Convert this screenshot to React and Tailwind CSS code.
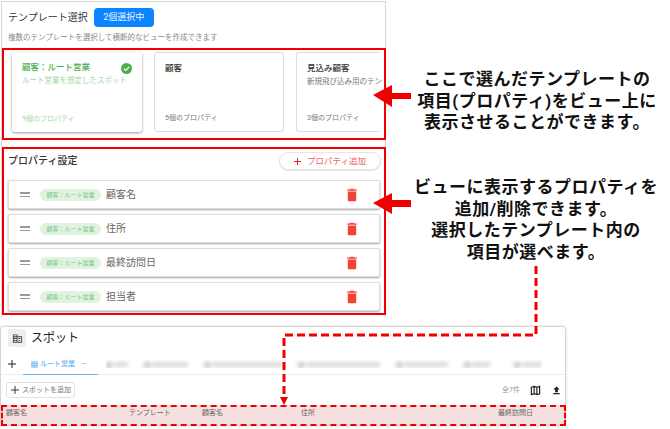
import React from "react";

const font = { fontFamily: '"Roboto","Noto Sans CJK JP",sans-serif' };

function Card({ title, desc, count, selected, narrow }) {
  return (
    <div className={`relative shrink-0 h-[80px] rounded-[3px] bg-white pl-[10px] pt-[9px] ${narrow ? "w-[85px] border border-r-0 border-[#dcdcdc]" : "w-[130px]"} ${selected ? "shadow-[0_1px_3px_rgba(0,0,0,0.4)]" : narrow ? "" : "border border-[#dcdcdc]"}`}>
      <div className={`text-[8.5px] leading-[12px] font-medium whitespace-nowrap ${selected ? "text-[#4caf50]" : "text-[#333]"}`}>{title}</div>
      <div className={`mt-[3px] h-[10px] whitespace-nowrap text-[7.5px] leading-[10px] ${selected ? "text-[#a5d6a7]" : "text-[#777]"}`}>{desc}</div>
      <div className={`absolute left-[10px] bottom-[8px] text-[7px] leading-[10px] ${selected ? "text-[#a5d6a7]" : "text-[#777]"}`}>{count}</div>
      {selected && (
        <svg className="absolute right-[10px] top-[11px]" width="11" height="11" viewBox="0 0 24 24">
          <circle cx="12" cy="12" r="12" fill="#4caf50" />
          <path d="M6.5 12.5l3.8 3.8 7.5-8" fill="none" stroke="#fff" strokeWidth="2.6" />
        </svg>
      )}
    </div>
  );
}

function Row({ name }) {
  return (
    <div className="flex h-[29px] items-center rounded-[2px] border border-[#dedede] bg-white shadow-[0_1px_2px_rgba(0,0,0,0.35)]">
      <div className="ml-[11px] flex w-[10px] flex-col gap-[2px]">
        <div className="h-[1.5px] bg-[#999]" />
        <div className="h-[1.5px] bg-[#999]" />
      </div>
      <div className="ml-[10px] flex h-[12px] w-[61px] items-center justify-center whitespace-nowrap rounded-full bg-[#e0f2e0] text-[6px] text-[#81c784]">顧客：ルート営業</div>
      <div className="ml-[5px] flex-1 text-[10px] text-[#666]">{name}</div>
      <svg className="mr-[21px]" width="12" height="14" viewBox="4 2 16 20" fill="#f44336">
        <path d="M6 19c0 1.1.9 2 2 2h8c1.1 0 2-.9 2-2V7H6v12zM19 4h-3.5l-1-1h-5l-1 1H5v2h14V4z" />
      </svg>
    </div>
  );
}

function BlurTab({ w, gap }) {
  return (
    <div className="flex shrink-0 items-center gap-[2px] blur-[2px]" style={{ marginRight: gap }}>
      <div className="h-[6px] w-[6px] rounded-[1px] bg-[#c4c4c4]" />
      <div className="h-[5px] bg-[#d8d8d8]" style={{ width: w }} />
    </div>
  );
}

export default function App() {
  return (
    <div className="relative h-[429px] w-[670px] overflow-hidden bg-white" style={font}>
      {/* upper panel */}
      <div className="ml-[1px] mt-[1px] h-[316px] w-[385px] border-x border-t border-[#d6d6d6] bg-white">
        <div className="flex items-center pl-[6px] pt-[6px]">
          <span className="text-[10px] text-[#333]">テンプレート選択</span>
          <span className="ml-[6px] flex h-[19px] w-[60px] items-center justify-center rounded-[4px] bg-[#0a84ff] text-[9px] text-[#e6f2ff]">2個選択中</span>
        </div>
        <div className="pl-[6px] pt-[5px] text-[7.5px] leading-[12px] text-[#8a8a8a]">複数のテンプレートを選択して横断的なビューを作成できます</div>
        <div className="mt-[8px] flex gap-[12px] pl-[10px]">
          <Card title="顧客：ルート営業" desc="ルート営業を想定したスポット" count="9個のプロパティ" selected />
          <Card title="顧客" desc="" count="5個のプロパティ" />
          <Card title="見込み顧客" desc="新規飛び込み用のテン" count="3個のプロパティ" narrow />
        </div>
        <div className="flex items-start justify-between pl-[6px] pr-[4px] pt-[20px]">
          <span className="pt-[2px] text-[10px] font-medium leading-[14px] text-[#333]">プロパティ設定</span>
          <div className="flex h-[18px] w-[102px] items-center justify-center gap-[6px] rounded-full border border-[#e6e6e6] bg-white text-[8.5px] text-[#f0616a] shadow-[0_1px_1px_rgba(0,0,0,0.12)]">
            <svg width="7" height="7" viewBox="0 0 7 7" stroke="#f01c2c" strokeWidth="1"><path d="M3.5 0v7M0 3.5h7" /></svg>
            <span>プロパティ追加</span>
          </div>
        </div>
        <div className="ml-[6px] mr-[5px] mt-[10px] flex flex-col gap-[5px]">
          <Row name="顧客名" />
          <Row name="住所" />
          <Row name="最終訪問日" />
          <Row name="担当者" />
        </div>
      </div>

      {/* lower panel */}
      <div className="ml-[1px] mt-[10px] h-[98px] w-[564px] rounded-[2px] bg-white shadow-[0_0_3px_rgba(0,0,0,0.45)]">
        <div className="flex items-center pl-[7px] pt-[2px]">
          <div className="flex h-[18px] w-[18px] items-center justify-center rounded-[3px] bg-[#eeeeee]">
            <svg width="11" height="11" viewBox="0 0 24 24" fill="#444">
              <path d="M12 7V3H2v18h20V7H12zM10 19H4v-2h6v2zm0-4H4v-2h6v2zm0-4H4V9h6v2zm0-4H4V5h6v2zm10 12h-8V9h8v10zm-2-8h-4v2h4v-2zm0 4h-4v2h4v-2z" />
            </svg>
          </div>
          <span className="ml-[5px] text-[12px] text-[#222]">スポット</span>
        </div>
        <div className="flex h-[28px] items-center border-b border-[#eeeeee] pt-[6px]">
          <svg className="ml-[7px]" width="8" height="8" viewBox="0 0 8 8" stroke="#222" strokeWidth="1"><path d="M4 0v8M0 4h8" /></svg>
          <div className="ml-[7px] -mb-[1px] flex h-[22px] w-[75px] items-center gap-[2px] border-b-[1.5px] border-[#64b5f6] pl-[8px] pt-[2px] text-[7px] font-medium text-[#64b5f6]">
            <svg width="7" height="7" viewBox="0 0 24 24" fill="none" stroke="#64b5f6" strokeWidth="3"><rect x="3" y="3" width="18" height="18" /><path d="M3 9h18M3 15h18M12 9v12" /></svg>
            <span className="whitespace-nowrap">ルート営業</span>
            <span className="ml-[4px] text-[#90caf9]">—</span>
          </div>
          <div className="ml-[8px] flex items-center overflow-hidden pt-[2px]">
            <BlurTab w={14} gap={16} />
            <BlurTab w={36} gap={16} />
            <BlurTab w={70} gap={16} />
            <BlurTab w={74} gap={16} />
            <BlurTab w={44} gap={16} />
            <BlurTab w={18} gap={24} />
            <BlurTab w={20} gap={0} />
          </div>
        </div>
        <div className="flex h-[30px] items-center pl-[5px]">
          <div className="flex h-[16px] w-[69px] items-center gap-[3px] rounded-[3px] border border-[#e2e2e2] pl-[4px] text-[7px] text-[#777]">
            <svg width="8" height="8" viewBox="0 0 8 8" stroke="#333" strokeWidth="1"><path d="M4 0v8M0 4h8" /></svg>
            スポットを追加
          </div>
          <div className="ml-auto flex items-center">
            <span className="mr-[10px] text-[7px] text-[#999]">全7件</span>
            <svg className="mr-[10px]" width="11" height="11" viewBox="0 0 24 24" fill="none" stroke="#222" strokeWidth="2.6">
              <path d="M3 5l6-2 6 2 6-2v16l-6 2-6-2-6 2zM9 3v16M15 5v16" />
            </svg>
            <svg className="mr-[3px]" width="11" height="11" viewBox="0 0 24 24" fill="#222">
              <path d="M5 20h14v-2.5H5V20zm0-10h4v6h6v-6h4l-7-7-7 7z" />
            </svg>
          </div>
        </div>
        <div className="relative h-[20px] bg-[#f5dfdf] text-[7px] text-[#666]">
          <span className="absolute left-[5px] top-[3px]">顧客名</span>
          <span className="absolute left-[128px] top-[3px]">テンプレート</span>
          <span className="absolute left-[201px] top-[3px]">顧客名</span>
          <span className="absolute left-[300px] top-[3px]">住所</span>
          <span className="absolute left-[497px] top-[3px]">最終訪問日</span>
        </div>
      </div>

      {/* callouts */}
      <div className="absolute left-[408px] top-[69px] w-[258px] text-center text-[17px] font-bold leading-[21.5px] tracking-[0.5px] text-[#111]">
        ここで選んだテンプレートの<br />項目(プロパティ)をビュー上に<br />表示させることができます。
      </div>
      <div className="absolute left-[407px] top-[177px] w-[258px] text-center text-[17px] font-bold leading-[21.5px] tracking-[0.5px] text-[#111]">
        ビューに表示するプロパティを<br />追加/削除できます。<br />選択したテンプレート内の<br />項目が選べます。
      </div>

      {/* annotation overlay */}
      <div className="absolute left-[2px] top-[48px] h-[92px] w-[384px] border-2 border-[#f00000]" />
      <div className="absolute left-[2px] top-[147px] h-[168px] w-[384px] border-2 border-[#f00000]" />
      <div className="absolute left-[1px] top-[405px] h-[21px] w-[565px] border-[2.5px] border-dashed border-[#f00000]" />
      <svg className="absolute left-0 top-0" width="670" height="429" fill="none">
        <path d="M373 95l19-10v8h19v6h-19v8z" fill="#f00000" />
        <path d="M373 203l19-10v7h19v7h-19v7z" fill="#f00000" />
        <path d="M536 266V335H284V398" stroke="#f00000" strokeWidth="3" strokeDasharray="8 4" />
        <path d="M280 397h8l-4 8z" fill="#f00000" />
      </svg>
    </div>
  );
}
